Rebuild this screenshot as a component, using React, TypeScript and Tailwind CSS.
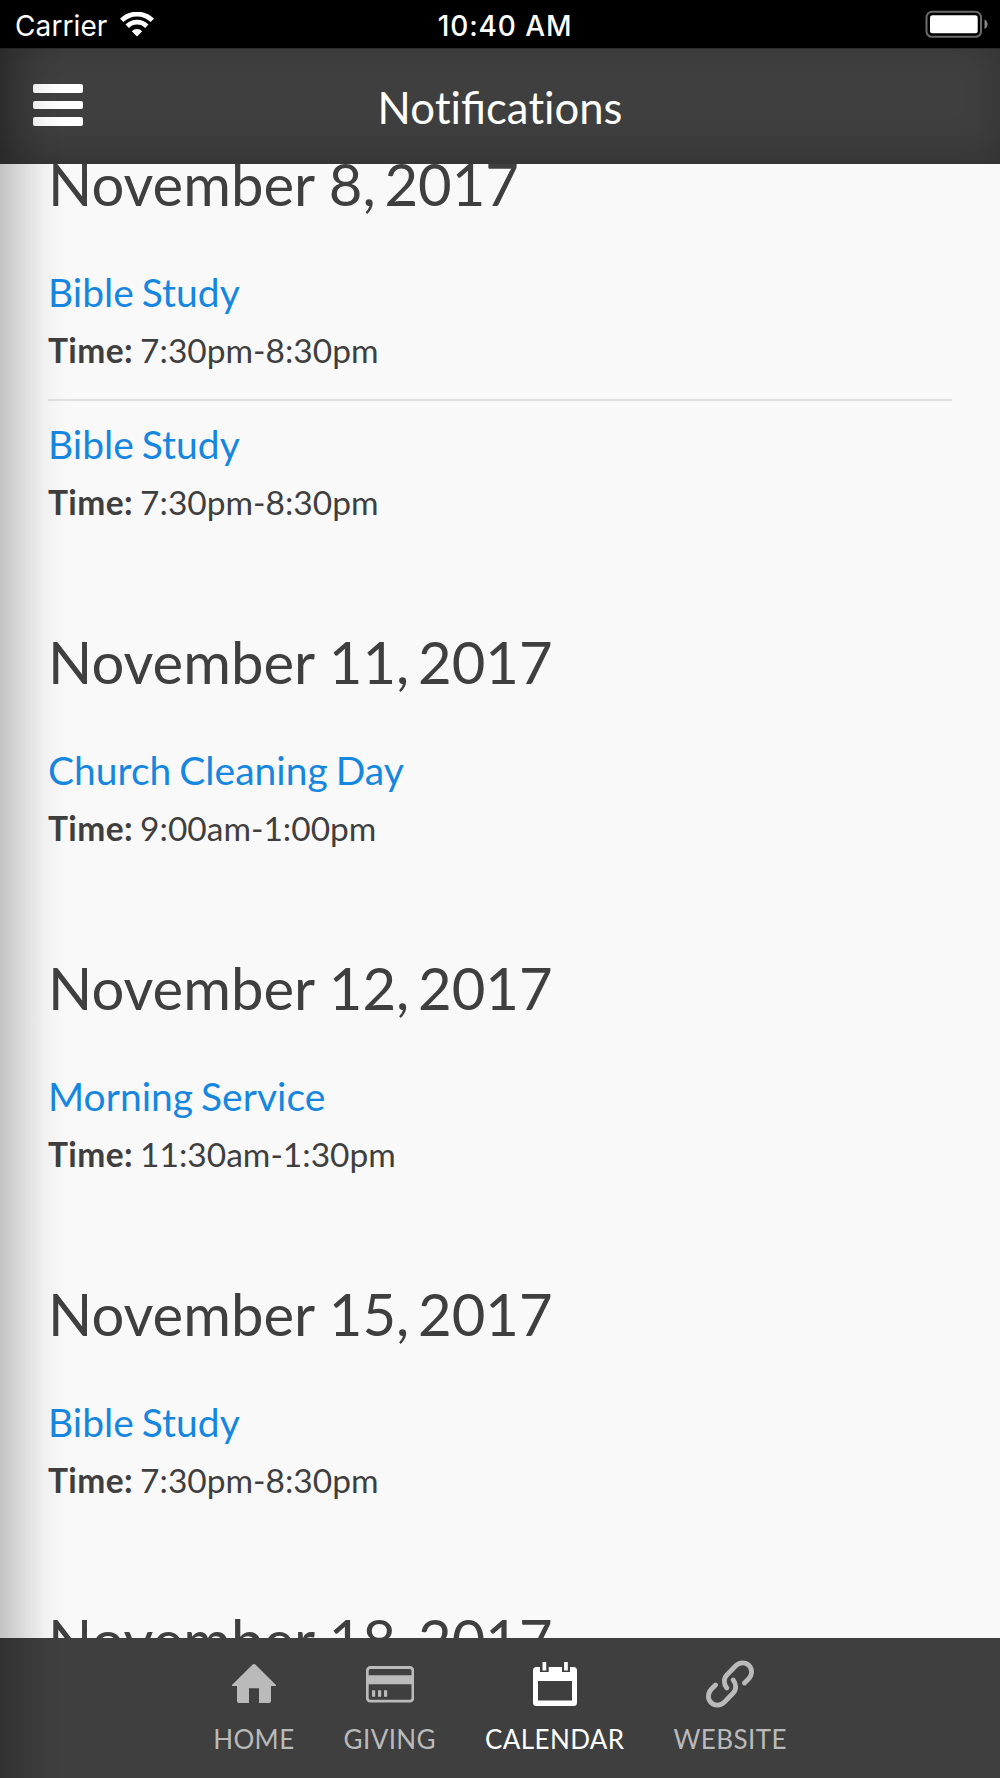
const sections = [
  { day: "November 8,", year: "2017", events: [{ title: "Bible Study", time: "7:30pm-8:30pm" }, { title: "Bible Study", time: "7:30pm-8:30pm" }] },
  { day: "November 11,", year: "2017", events: [{ title: "Church Cleaning Day", time: "9:00am-1:00pm" }] },
  { day: "November 12,", year: "2017", events: [{ title: "Morning Service", time: "11:30am-1:30pm" }] },
  { day: "November 15,", year: "2017", events: [{ title: "Bible Study", time: "7:30pm-8:30pm" }] },
  { day: "November 18,", year: "2017", events: [] },
];

const HomeIcon = () => (
  <svg className="size-12" viewBox="0 0 48 48" fill="currentColor">
    <path d="M22.6 4.6a2 2 0 0 1 2.8 0L46 25v.9h-5V41a2 2 0 0 1-2 2H29V28.3H19V43H9a2 2 0 0 1-2-2V25.9H2V25z" />
  </svg>
);

const CardIcon = () => (
  <svg className="size-12" viewBox="0 0 48 48" fill="currentColor">
    <rect x="1.3" y="7.5" width="45.6" height="33.6" rx="3" fill="none" stroke="currentColor" strokeWidth="2.8" />
    <path d="M1 15.3h46v9H1zM6 30.3h3.2v6.4H6zM12 30.3h3.2v6.4H12zM18 30.3h3.2v6.4H18z" />
  </svg>
);

const CalendarIcon = () => (
  <svg className="size-12" viewBox="0 0 48 48" fill="currentColor">
    <path
      fillRule="evenodd"
      d="M5.5 7H9v5h8.7V7H31v5h8V7h3.5A3.5 3.5 0 0 1 46 10.5v32a3.5 3.5 0 0 1-3.5 3.5h-37A3.5 3.5 0 0 1 2 42.5v-32A3.5 3.5 0 0 1 5.5 7zM7 21v19.4h34V21z"
    />
    <path d="M11.5 2h3.7v8.5h-3.7zM33.1 2h3.7v8.5h-3.7z" />
  </svg>
);

const LinkIcon = () => (
  <svg className="size-12" viewBox="0 0 48 48" fill="none" stroke="currentColor" strokeWidth="4.8" strokeLinecap="round">
    <path d="M38.5 23L42.5 19C46.5 15 46.5 9 43 5.5C39.5 2 33.5 2 29.5 6L20.8 15C17.5 18.5 17.5 24 20.8 28" />
    <path d="M9.5 25L5.5 29C1.5 33 1.5 39 5 42.5C8.5 46 14.5 46 18.5 42L27.2 33C30.5 29.5 30.5 24 27.2 20" />
  </svg>
);

const tabs = [
  { label: "HOME", icon: <HomeIcon />, active: false },
  { label: "GIVING", icon: <CardIcon />, active: false },
  { label: "CALENDAR", icon: <CalendarIcon />, active: true },
  { label: "WEBSITE", icon: <LinkIcon />, active: false },
];

const StatusBar = () => (
  <div className="grid h-12 shrink-0 grid-cols-[1fr_auto_1fr] items-center bg-black pt-0.5 pl-[15px] pr-[12px] font-['Inter',sans-serif] text-white">
    <div className="flex items-center gap-[13px]">
      <span className="pt-px text-[28px] tracking-[0.1px]">Carrier</span>
      <svg className="mb-0.5 h-[25px] w-[34px]" viewBox="0 0 34 25" fill="none" stroke="currentColor" strokeWidth="4.8">
        <path d="M1.7 8.4a21.6 21.6 0 0 1 30.6 0" />
        <path d="M7.2 14.2a13.8 13.8 0 0 1 19.6 0" />
        <path d="M17 24.5l-5.2-5.3a7.4 7.4 0 0 1 10.4 0z" fill="currentColor" stroke="none" />
      </svg>
    </div>
    <div className="pt-px pl-[7px] text-center text-[28px] font-medium tracking-[0.9px]">10:40 AM</div>
    <svg className="mb-0.5 h-7 w-[63px] justify-self-end" viewBox="0 0 63 28">
      <rect x="1.5" y="1.8" width="54.5" height="25" rx="5.5" fill="none" stroke="#6b6b6b" strokeWidth="2" />
      <rect x="5" y="5.3" width="47.7" height="18" rx="2.5" fill="#fff" />
      <path d="M59.5 9.5c4 1.5 4 8 0 9.5z" fill="#858585" />
    </svg>
  </div>
);

const App: React.FC = () => {
  return (
    <div className="relative flex h-[1778px] w-[1000px] flex-col overflow-hidden bg-[#f9f9f9] font-['Lato',sans-serif] text-[#3f3f3f]">
      <StatusBar />
      <header className="grid h-[116px] shrink-0 grid-cols-[1fr_auto_1fr] items-center border-t border-[#2b2b2b] bg-[#3f3f3f] px-[33px] text-white shadow-[inset_0_-8px_36px_rgba(0,0,0,0.22)]">
        <div className="flex w-[50px] flex-col gap-2 pb-[3px]">
          <span className="h-[8.5px] rounded-[2px] bg-white" />
          <span className="h-[8.5px] rounded-[2px] bg-white" />
          <span className="h-[8.5px] rounded-[2px] bg-white" />
        </div>
        {/* only the "fi" pair is joined */}
        <h1 className="text-[43.6px] leading-[52px]">
          No<span className="[font-variant-ligatures:none]">t</span>ifica<span className="[font-variant-ligatures:none]">t</span>ions
        </h1>
      </header>

      <main className="min-h-0 flex-1 overflow-hidden px-12">
        {/* list is scrolled a little under the header */}
        <div className="-mt-[13px]">
          {sections.map((section) => (
            <section key={section.day} className="mb-[107px]">
              <h2 className="mb-[52px] text-[58px] leading-[66px]">
                {section.day}
                <span className="[word-spacing:-6px]"> {section.year}</span>
              </h2>
              <div className="divide-y-2 divide-[#e0e0e0]">
                {section.events.map((event, i) => (
                  <div key={i} className="pb-[29px] last:pb-0 not-first:pt-5">
                    <div className="mb-[15px] text-[39px] leading-[46px] text-[#1687e0] [word-spacing:-2px]">{event.title}</div>
                    <div className="text-[33.5px] leading-[40px] [word-spacing:-1.5px]">
                      <b className="tracking-[0.4px]">Time:</b> {event.time}
                    </div>
                  </div>
                ))}
              </div>
            </section>
          ))}
        </div>
      </main>

      <nav className="flex h-[140px] shrink-0 justify-center gap-[49px] bg-[#3f3f3f] pt-[22px]">
        {tabs.map((tab) => (
          <div key={tab.label} className={tab.active ? "flex flex-col items-center text-white" : "flex flex-col items-center text-[#bababa]"}>
            {tab.icon}
            <span className="mt-[15px] text-[26px] leading-8 tracking-[0.4px]">{tab.label}</span>
          </div>
        ))}
      </nav>

      {/* shadow cast by the side menu */}
      <div className="pointer-events-none absolute bottom-0 left-0 top-12 w-[66px] bg-[linear-gradient(to_right,rgba(0,0,0,0.22),rgba(0,0,0,0.13)_30%,rgba(0,0,0,0.03)_68%,transparent)]" />
    </div>
  );
};

export default App;
